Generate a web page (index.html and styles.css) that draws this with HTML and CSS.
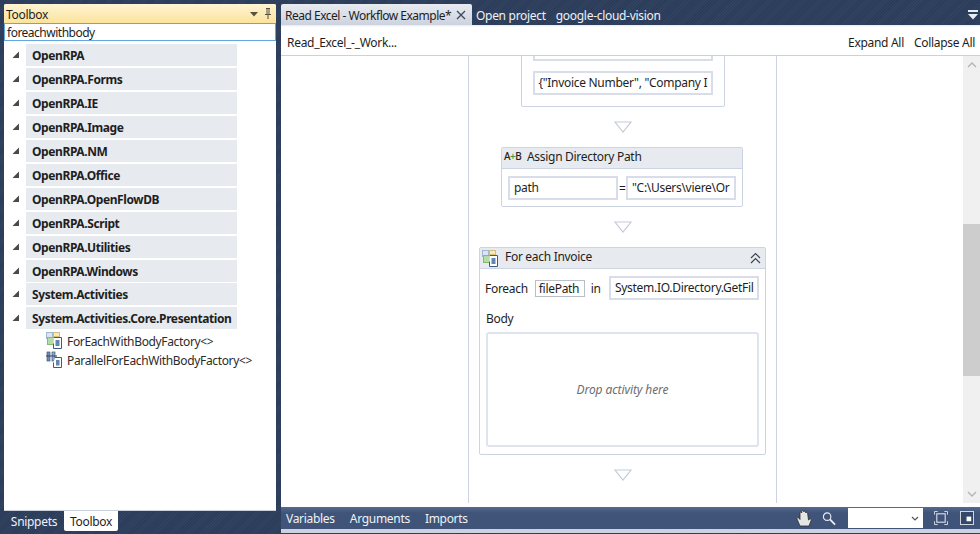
FILE: index.html
```html
<!DOCTYPE html>
<html lang="en">
<head>
  <meta charset="UTF-8" />
  <title>OpenRPA</title>
  <link rel="stylesheet" href="styles.css">
</head>
<body>
  <svg class="defs" width="0" height="0">
    <symbol id="expander" viewBox="0 0 8 8"><polygon points="7,0.5 7,7 0.5,7" fill="#4a4a4a"/></symbol>
    <symbol id="foreach" viewBox="0 0 17 17">
      <rect x="0.5" y="0.5" width="6" height="6" fill="#dbe5f2" stroke="#a3b6d1"/>
      <rect x="7.5" y="0.5" width="6" height="4" fill="#f6e9bd" stroke="#d6bd78"/>
      <rect x="1.5" y="5.5" width="7" height="7" fill="#b5dca6" stroke="#86ba77"/>
      <path d="M8 5.500h7.500v11H7.500v-5" fill="#fff" stroke="#3c5a82"/>
      <rect x="9.500" y="8" width="4" height="6" fill="#6387b0"/>
    </symbol>
    <symbol id="parallel" viewBox="0 0 17 17">
      <rect x="1" y="1" width="3" height="9" fill="#6f8db5" stroke="#42597b" stroke-width="0.700"/>
      <rect x="6" y="1" width="3" height="9" fill="#8aa6c9" stroke="#42597b" stroke-width="0.700"/>
      <path d="M0 5h11" stroke="#2f3f58"/>
      <path d="M9 6.500h6.500v10H7.500v-5" fill="#fff" stroke="#3c5a82"/>
      <rect x="10" y="9" width="3.500" height="5.500" fill="#6387b0"/>
    </symbol>
    <symbol id="flow-arrow" viewBox="0 0 18 12"><polygon points="1,1 17,1 9,11" fill="#fff" stroke="#c3cbd9" stroke-width="1.200"/></symbol>
  </svg>

  <div class="app">
    <!-- Toolbox -->
    <aside class="side">
      <div class="toolbox">
        <div class="toolbox-title">
          <span class="title-text">Toolbox</span>
          <svg class="title-icons" width="26" height="14" viewBox="0 0 26 14">
            <polygon points="3,5 11,5 7,9.500" fill="#57523f"/>
            <path d="M19 1.500h4M20 1.500v6h2v-6M18 7.500h6M21 7.500v4.500" fill="none" stroke="#57523f"/>
          </svg>
        </div>
        <div class="search">foreachwithbody</div>
        <div class="pkg-list">
          <div class="pkg"><svg class="exp"><use href="#expander"/></svg><b>OpenRPA</b></div>
          <div class="pkg"><svg class="exp"><use href="#expander"/></svg><b>OpenRPA.Forms</b></div>
          <div class="pkg"><svg class="exp"><use href="#expander"/></svg><b>OpenRPA.IE</b></div>
          <div class="pkg"><svg class="exp"><use href="#expander"/></svg><b>OpenRPA.Image</b></div>
          <div class="pkg"><svg class="exp"><use href="#expander"/></svg><b>OpenRPA.NM</b></div>
          <div class="pkg"><svg class="exp"><use href="#expander"/></svg><b>OpenRPA.Office</b></div>
          <div class="pkg"><svg class="exp"><use href="#expander"/></svg><b>OpenRPA.OpenFlowDB</b></div>
          <div class="pkg"><svg class="exp"><use href="#expander"/></svg><b>OpenRPA.Script</b></div>
          <div class="pkg"><svg class="exp"><use href="#expander"/></svg><b>OpenRPA.Utilities</b></div>
          <div class="pkg"><svg class="exp"><use href="#expander"/></svg><b>OpenRPA.Windows</b></div>
          <div class="pkg tight"><svg class="exp"><use href="#expander"/></svg><b>System.Activities</b></div>
          <div class="pkg"><svg class="exp"><use href="#expander"/></svg><b>System.Activities.Core.Presentation</b></div>
          <div class="tool"><svg class="ico"><use href="#foreach"/></svg>ForEachWithBodyFactory&lt;&gt;</div>
          <div class="tool"><svg class="ico"><use href="#parallel"/></svg>ParallelForEachWithBodyFactory&lt;&gt;</div>
        </div>
      </div>
      <div class="side-tabs">
        <span class="side-tab">Snippets</span>
        <span class="side-tab active">Toolbox</span>
      </div>
    </aside>

    <!-- Designer -->
    <main class="main">
      <div class="tabs">
        <div class="tab active"><span class="tab-text">Read Excel - Workflow Example*</span>
          <svg class="close" width="10" height="10" viewBox="0 0 10 10"><path d="M1 1l8 8M9 1l-8 8" stroke="#3e4a5c" stroke-width="1.300"/></svg>
        </div>
        <div class="tab">Open project</div>
        <div class="tab">google-cloud-vision</div>
        <svg class="tab-menu" width="10" height="10" viewBox="0 0 10 10"><path d="M0 0h10v2H0zM0 4h10L5 9.500z" fill="#e8edf5"/></svg>
      </div>
      <div class="toolbar">
        <span class="crumb">Read_Excel_-_Work...</span>
        <span class="toolbar-link">Expand All</span>
        <span class="toolbar-link">Collapse All</span>
      </div>
      <div class="canvas">
        <div class="sequence">
          <div class="card card-top">
            <div class="field field-cut"></div>
            <div class="field">{"Invoice Number", "Company I</div>
          </div>
          <svg class="flow-arrow"><use href="#flow-arrow"/></svg>
          <div class="card card-assign">
            <div class="card-head">
              <span class="assign-ico">A<i>+</i>B</span>
              <span>Assign Directory Path</span>
            </div>
            <div class="assign-row">
              <div class="field">path</div>
              <span class="eq">=</span>
              <div class="field">"C:\Users\viere\Or</div>
            </div>
          </div>
          <svg class="flow-arrow"><use href="#flow-arrow"/></svg>
          <div class="card card-foreach">
            <div class="card-head">
              <svg class="ico"><use href="#foreach"/></svg>
              <span>For each Invoice</span>
              <svg class="collapse" width="11" height="12" viewBox="0 0 11 12"><path d="M1 6l4.500-4.500L10 6M1 11l4.500-4.500L10 11" fill="none" stroke="#3c4657" stroke-width="1.200"/></svg>
            </div>
            <div class="foreach-row">
              <span>Foreach</span>
              <div class="var-box">filePath</div>
              <span>in</span>
              <div class="field">System.IO.Directory.GetFil</div>
            </div>
            <div class="body-label">Body</div>
            <div class="drop">Drop activity here</div>
          </div>
          <svg class="flow-arrow"><use href="#flow-arrow"/></svg>
        </div>
        <div class="scrollbar">
          <svg class="chev" width="10" height="6" viewBox="0 0 10 6"><path d="M1 5l4-4 4 4" fill="none" stroke="#b4b4b4" stroke-width="1.400"/></svg>
          <div class="thumb"></div>
          <svg class="chev" width="10" height="6" viewBox="0 0 10 6"><path d="M1 1l4 4 4-4" fill="none" stroke="#b4b4b4" stroke-width="1.400"/></svg>
        </div>
      </div>
      <div class="statusbar">
        <span class="status-link">Variables</span>
        <span class="status-link">Arguments</span>
        <span class="status-link">Imports</span>
        <svg class="hand" width="17" height="18" viewBox="0 0 17 18">
          <path d="M4 17l-3-7c-.5-1.500 1-2 1.800-1L4 10.500V4c0-1.200 1.500-1.200 1.700 0V2.500c0-1.200 1.800-1.200 2 0V3c.2-1.200 1.900-1.200 2 0v1c.2-1.200 1.900-1 1.900.2L12.500 11c1-1 2.800-1.300 3-.5L13 17z" fill="#e6e6e6" stroke="#2e2e2e" stroke-width="0.800"/>
        </svg>
        <svg class="zoom" width="14" height="15" viewBox="0 0 15 15">
          <circle cx="5.500" cy="5.500" r="4" fill="none" stroke="#e8edf5" stroke-width="1.200"/>
          <path d="M8.500 8.500l5.500 5.500" stroke="#e8edf5" stroke-width="2"/>
        </svg>
        <div class="combo">
          <svg width="8" height="5" viewBox="0 0 8 5"><path d="M1 1l3 3 3-3" fill="none" stroke="#555" stroke-width="1.200"/></svg>
        </div>
        <svg class="fit" width="14" height="14" viewBox="0 0 15 15">
          <rect x="3" y="3" width="9" height="9" fill="none" stroke="#d9dfe8" stroke-width="1.200"/>
          <path d="M0.500 4V0.500H4M11 0.500h3.500V4M14.500 11v3.500H11M4 14.500H0.500V11" fill="none" stroke="#d9dfe8"/>
        </svg>
        <svg class="overview" width="14" height="14" viewBox="0 0 15 15">
          <rect x="0.500" y="0.500" width="14" height="14" fill="#33476a" stroke="#d9dfe8"/>
          <rect x="7" y="6" width="5" height="5" fill="#fff"/>
        </svg>
      </div>
    </main>
  </div>
</body>
</html>
```

FILE: styles.css
```css
html, body { margin:0; height:100%; }
body { font-family:"Noto Sans", sans-serif; font-size:12px; letter-spacing:-0.3px; color:#1e1e1e; overflow:hidden;
  background:repeating-linear-gradient(135deg, #2b3c5a 0 1px, #31435f 1px 2px); }
.defs { position:absolute; }
.app { display:flex; height:534px; box-sizing:border-box; padding:4px 0 0 4px; }

/* toolbox */
.side { width:272px; flex:none; display:flex; flex-direction:column; }
.toolbox { height:507px; box-sizing:border-box; background:white; border-radius:2px 2px 0 0; border-bottom:1px solid #c9cfdb; }
.toolbox-title { height:19px; display:flex; align-items:center; justify-content:space-between; padding:0 2px; background:linear-gradient(#fff4d3, #fbe39c); border-radius:2px 2px 0 0; }
.title-text { line-height:21px; padding-top:1px; }
.title-icons { margin-right:1px; }
.search { height:18px; line-height:17px; box-sizing:border-box; padding-left:2px; border:1px solid #63a7e0; letter-spacing:-0.5px; }
.pkg-list { padding-top:3px; }
.pkg { height:22px; width:211px; margin:0 0 2px 22px; padding-left:6px; box-sizing:border-box; line-height:24px; background:#e7eaee; position:relative; }
.pkg.tight { margin-top:-1px; }
.pkg b { font-weight:700; letter-spacing:-0.4px; }
.exp { position:absolute; left:-14px; top:7px; width:8px; height:8px; }
.tool { height:19px; box-sizing:border-box; padding:2px 0 0 42px; display:flex; align-items:center; color:#2b2b2b; letter-spacing:-0.35px; }
.ico { width:17px; height:17px; margin-right:4px; flex:none; }
.tool .ico { margin-top:-2px; }
.side-tabs { display:flex; height:20px; }
.side-tab { padding:0 6px; line-height:22px; color:#eef2f7; width:48px; text-align:center; }
.side-tab.active { background:white; color:#1e1e1e; width:42px; border-radius:0 0 2px 2px; }

/* designer */
.main { margin-left:5px; flex:1; min-width:0; display:flex; flex-direction:column; }
.tabs { height:21px; display:flex; align-items:center; position:relative; flex:none; white-space:nowrap; }
.tab { color:#eef2f7; padding:1px 6px 0 4px; line-height:21px; }
.tab.active { width:181px; height:21px; box-sizing:content-box; color:#1e1e1e; padding:0 6px 0 4px; display:flex; align-items:center; justify-content:space-between; background:linear-gradient(#e8ebf0, #ccd3df); border-radius:2px 2px 0 0; }
.tab-text { letter-spacing:-0.5px; padding-top:1px; }
.tab-menu { position:absolute; right:2px; top:6px; }
.toolbar { height:31px; padding:4px 5px 0 6px; box-sizing:border-box; display:flex; align-items:center; gap:10px; background:linear-gradient(#e4e8ef, white 2px); border-bottom:1px solid #ccd1de; flex:none; }
.crumb { margin-right:auto; }
.canvas { flex:1; min-height:0; background:white; display:flex; overflow:hidden; position:relative; }
.sequence { margin-left:187px; width:309px; height:447px; box-sizing:border-box; border:solid #ccd3e3; border-width:0 1px; display:flex; flex-direction:column; align-items:center; }
.scrollbar { position:absolute; right:0; top:0; width:17px; height:447px; background:#f0f0f0; display:flex; flex-direction:column; align-items:center; justify-content:space-between; padding:6px 0; box-sizing:border-box; }
.thumb { position:absolute; top:168px; left:0; width:17px; height:152px; background:#cdcdcd; }

.card { border:1px solid #ccd3e3; border-radius:2px; box-sizing:border-box; background:white; flex:none; }
.card-top { width:204px; height:93px; margin-top:-42px; padding:0 11px 11px; display:flex; flex-direction:column; justify-content:flex-end; gap:10px; }
.card-assign { width:242px; height:60px; margin-right:1px; }
.card-foreach { width:287px; height:208px; }
.flow-arrow { width:18px; height:12px; margin:14px 0; flex:none; }
.card-head { height:20px; display:flex; align-items:center; background:#e7eaee; border-bottom:1px solid #ccd3e3; padding:0 4px; }
.card-head span { position:relative; top:-2px; }
.field { height:24px; line-height:20px; box-sizing:border-box; padding:0 4px; border:2px solid #d8dde9; white-space:nowrap; overflow:hidden; background:white; }
.field-cut { flex:none; height:14px; }
.card-assign .card-head { gap:7px; padding-left:2px; }
.assign-ico { font-size:10px; letter-spacing:-0.5px; color:#222; width:16px; font-weight:500; }
.assign-ico i { color:#3a9a3a; font-style:normal; }
.assign-row { display:flex; align-items:center; padding:7px 6px 0; gap:1px; }
.assign-row .field { width:110px; }
.eq { width:6px; text-align:center; }
.card-foreach .card-head { padding-left:2px; }
.card-foreach .ico { margin-right:6px; }
.collapse { margin-left:auto; }
.foreach-row { display:flex; align-items:center; padding:7px 6px 0 5px; }
.var-box { width:50px; height:17px; line-height:15px; box-sizing:border-box; border:1px solid #b9bec7; padding-left:3px; margin:0 6px 0 7px; }
.foreach-row .field { width:150px; margin-left:auto; }
.body-label { padding:10px 0 0 6px; line-height:17px; }
.drop { margin:5px 6px 0; height:115px; box-sizing:border-box; border:2px solid #dfe3ee; border-radius:3px; display:flex; align-items:center; justify-content:center; font-style:italic; color:#6d6d6d; letter-spacing:-0.1px; }

/* bottom bar */
.statusbar { height:22px; margin-bottom:1px; flex:none; display:flex; align-items:center; background:linear-gradient(#56698e, #3f5478 6px); color:#eef2f7; border-bottom:4px solid #ccd3e0; padding-left:5px; }
.status-link { margin-right:15px; }
.hand { margin-left:auto; margin-right:9px; }
.zoom { margin-right:12px; }
.combo { width:75px; height:20px; background:white; display:flex; align-items:center; justify-content:flex-end; padding-right:4px; box-sizing:border-box; margin-right:11px; }
.fit { margin-right:12px; }
.overview { margin-right:6px; }
```
